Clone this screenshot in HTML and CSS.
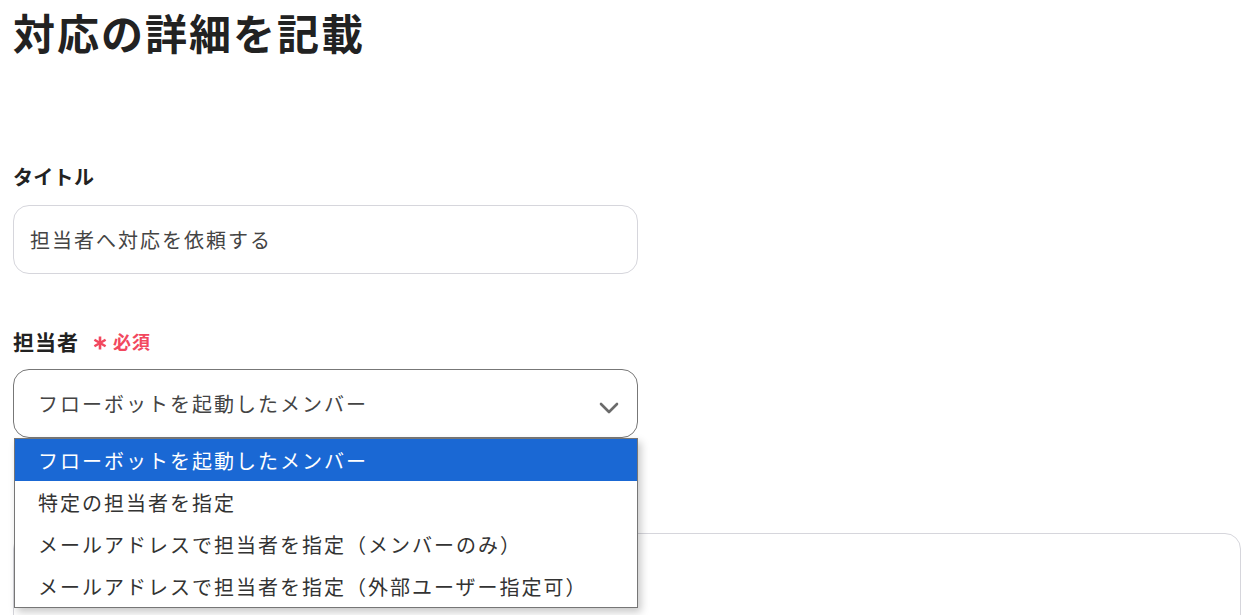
FILE: index.html
```html
<!DOCTYPE html>
<html lang="ja">
<head>
<meta charset="utf-8">
<link rel="stylesheet" href="styles.css">
</head>
<body>
<main class="page">
  <h1 class="title">対応の詳細を記載</h1>

  <section class="field field-title">
    <div class="label">タイトル</div>
    <div class="input">担当者へ対応を依頼する</div>
  </section>

  <section class="field field-assignee">
    <div class="label">担当者<span class="required"><svg class="star" width="14" height="14" viewBox="0 0 14 14"><g stroke="#f2485e" stroke-width="2.6" stroke-linecap="butt"><line x1="7" y1="0.5" x2="7" y2="13.5"/><line x1="1.4" y1="3.75" x2="12.6" y2="10.25"/><line x1="1.4" y1="10.25" x2="12.6" y2="3.75"/></g></svg>必須</span></div>
    <div class="select-wrap">
      <div class="select">
        <span>フローボットを起動したメンバー</span>
        <svg class="chevron" width="20" height="12" viewBox="0 0 20 12"><path d="M2 2 L10 10 L18 2" fill="none" stroke="#6b6b6b" stroke-width="2.6" stroke-linecap="round" stroke-linejoin="round"/></svg>
      </div>
      <ul class="menu">
        <li class="option active">フローボットを起動したメンバー</li>
        <li class="option">特定の担当者を指定</li>
        <li class="option">メールアドレスで担当者を指定（メンバーのみ）</li>
        <li class="option">メールアドレスで担当者を指定（外部ユーザー指定可）</li>
      </ul>
    </div>
  </section>

  <section class="field field-next">
    <div class="label">&nbsp;</div>
    <div class="textarea"></div>
  </section>
</main>
</body>
</html>
```

FILE: styles.css
```css
* { box-sizing: border-box; }
html, body { margin: 0; padding: 0; background: #fff; }
html { height: 615px; overflow: hidden; }
body {
  font-family: "Noto Sans CJK JP", "Noto Sans", sans-serif;
  color: #222;
  overflow: hidden;
  height: 615px;
}
.page {
  padding: 0 7px 0 13px;
  width: 1247px;
}
.title {
  margin: 0;
  padding-top: 2px;
  font-size: 42px;
  line-height: 60px;
  font-weight: 700;
  letter-spacing: 2px;
  color: #222;
}
.field { display: flex; flex-direction: column; }
.field-title { margin-top: 100px; }
.label {
  font-size: 20px;
  line-height: 30px;
  font-weight: 700;
  letter-spacing: 0.3px;
  color: #222;
  display: flex;
  align-items: center;
}
.field-assignee .label { font-size: 21px; letter-spacing: 1px; }
.required {
  color: #f2485e;
  font-size: 18px;
  margin-left: 14px;
  display: inline-flex;
  align-items: center;
  letter-spacing: 1px;
}
.star { margin-right: 6px; margin-top: 4px; }
.input {
  margin-top: 13px;
  width: 625px;
  height: 69px;
  border: 1px solid #d6d6dc;
  border-radius: 16px;
  padding: 0 16px;
  display: flex;
  align-items: center;
  font-size: 20px;
  letter-spacing: 2px;
  color: #444;
}
.field-assignee { margin-top: 52px; }
.select-wrap { position: relative; margin-top: 13px; width: 625px; }
.select {
  height: 69px;
  border: 1px solid #777;
  border-radius: 16px;
  padding: 0 18px 0 24px;
  display: flex;
  align-items: center;
  justify-content: space-between;
  font-size: 20px;
  letter-spacing: 2px;
  color: #444;
}
.chevron { margin-top: 8px; }
.menu {
  position: absolute;
  left: 1px;
  top: 69px;
  width: 624px;
  margin: 0;
  padding: 0;
  list-style: none;
  background: #fff;
  border: 1px solid #767676;
  box-shadow: 3px 4px 8px rgba(0,0,0,0.22);
  z-index: 5;
}
.option {
  height: 42px;
  padding-left: 23px;
  display: flex;
  align-items: center;
  font-size: 20px;
  letter-spacing: 2px;
  color: #333;
}
.option.active {
  background: #1a68d4;
  color: #fff;
}
.field-next { margin-top: 55px; }
.textarea {
  margin-top: 10px;
  width: 1228px;
  height: 110px;
  border: 1px solid #d6d6dc;
  border-radius: 16px;
}
```
